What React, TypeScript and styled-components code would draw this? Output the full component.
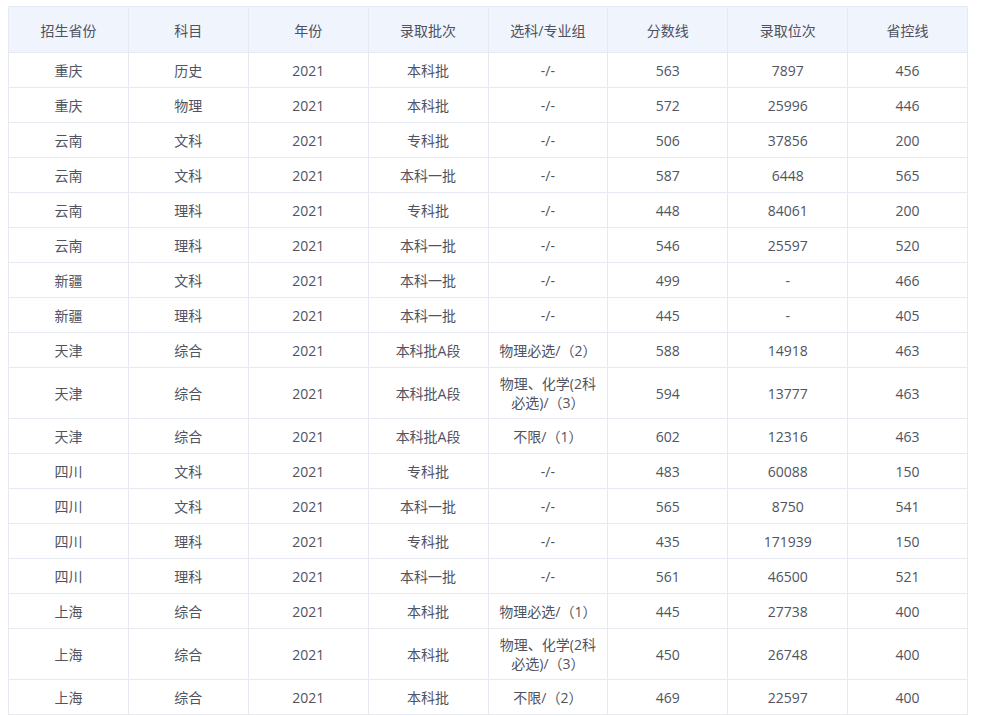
import React from "react";
import styled, { createGlobalStyle } from "styled-components";

const Global = createGlobalStyle`
  html, body { margin: 0; padding: 0; background: #ffffff; }
  body {
    font-family: "Open Sans", "Noto Sans CJK SC", sans-serif;
    color: #505361;
  }
`;

const Page = styled.div`
  padding: 6px 8px 0 8px;
`;

const Table = styled.table`
  width: 960px;
  border-collapse: collapse;
  table-layout: fixed;
  font-size: 14px;
`;

const HeadCell = styled.th`
  height: 46px;
  box-sizing: border-box;
  padding: 0 10px;
  background: #f0f4fd;
  border: 1px solid #e6e9f2;
  font-weight: 400;
  color: #4e5160;
  text-align: center;
  vertical-align: middle;
`;

const Cell = styled.td`
  height: 35px;
  box-sizing: border-box;
  padding: 6px 10px;
  line-height: 19px;
  border: 1px solid #e6e9f2;
  text-align: center;
  vertical-align: middle;
  color: #505361;
  word-break: break-all;
`;

const headers = ["招生省份", "科目", "年份", "录取批次", "选科/专业组", "分数线", "录取位次", "省控线"];

const rows: string[][] = [
  ["重庆", "历史", "2021", "本科批", "-/-", "563", "7897", "456"],
  ["重庆", "物理", "2021", "本科批", "-/-", "572", "25996", "446"],
  ["云南", "文科", "2021", "专科批", "-/-", "506", "37856", "200"],
  ["云南", "文科", "2021", "本科一批", "-/-", "587", "6448", "565"],
  ["云南", "理科", "2021", "专科批", "-/-", "448", "84061", "200"],
  ["云南", "理科", "2021", "本科一批", "-/-", "546", "25597", "520"],
  ["新疆", "文科", "2021", "本科一批", "-/-", "499", "-", "466"],
  ["新疆", "理科", "2021", "本科一批", "-/-", "445", "-", "405"],
  ["天津", "综合", "2021", "本科批A段", "物理必选/（2）", "588", "14918", "463"],
  ["天津", "综合", "2021", "本科批A段", "物理、化学(2科必选)/（3）", "594", "13777", "463"],
  ["天津", "综合", "2021", "本科批A段", "不限/（1）", "602", "12316", "463"],
  ["四川", "文科", "2021", "专科批", "-/-", "483", "60088", "150"],
  ["四川", "文科", "2021", "本科一批", "-/-", "565", "8750", "541"],
  ["四川", "理科", "2021", "专科批", "-/-", "435", "171939", "150"],
  ["四川", "理科", "2021", "本科一批", "-/-", "561", "46500", "521"],
  ["上海", "综合", "2021", "本科批", "物理必选/（1）", "445", "27738", "400"],
  ["上海", "综合", "2021", "本科批", "物理、化学(2科必选)/（3）", "450", "26748", "400"],
  ["上海", "综合", "2021", "本科批", "不限/（2）", "469", "22597", "400"],
];

export default function App() {
  return (
    <>
      <Global />
      <Page>
        <Table>
          <thead>
            <tr>
              {headers.map((h) => (
                <HeadCell key={h}>{h}</HeadCell>
              ))}
            </tr>
          </thead>
          <tbody>
            {rows.map((r, i) => (
              <tr key={i}>
                {r.map((c, j) => (
                  <Cell key={j}>{c}</Cell>
                ))}
              </tr>
            ))}
          </tbody>
        </Table>
      </Page>
    </>
  );
}
